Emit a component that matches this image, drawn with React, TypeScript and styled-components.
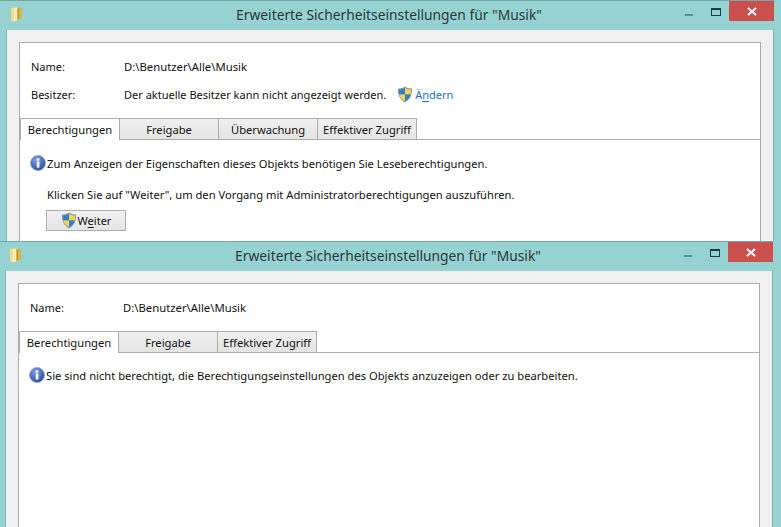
import { FC, ReactNode } from 'react';
import styled, { createGlobalStyle } from 'styled-components';

const GlobalStyle = createGlobalStyle`
  html, body {
    margin: 0;
    padding: 0;
    background: #97d2d2;
    overflow: hidden;
  }
  #root {
    width: 781px;
    height: 527px;
  }
`;

const Desktop = styled.div`
  width: 781px;
  height: 527px;
  overflow: hidden;
  display: flex;
  flex-direction: column;
  font-family: 'Noto Sans', 'Open Sans', sans-serif;
  font-size: 11px;
  color: #111;
`;

const WindowFrame = styled.section<{ $shift: number; $height: number }>`
  flex: none;
  box-sizing: border-box;
  width: 774px;
  height: ${p => p.$height}px;
  margin-left: ${p => p.$shift}px;
  display: flex;
  flex-direction: column;
  background: #97d2d2;
  border-top: 1px solid #71a9aa;
  overflow: hidden;
`;

const TitleBar = styled.header`
  flex: none;
  height: 29px;
  position: relative;
  display: flex;
  justify-content: center;
  padding: 3px 0 0 4px;
  box-sizing: border-box;
`;

const Title = styled.h1`
  margin: 0;
  font-size: 13.8px;
  font-weight: 400;
  line-height: 22px;
  color: #29393a;
`;

const FolderSlot = styled.div`
  position: absolute;
  left: 10px;
  top: 6px;
  line-height: 0;
`;

const Controls = styled.div`
  position: absolute;
  right: 0;
  top: 0;
  display: flex;
  align-items: center;
  height: 20px;
`;

const MinButton = styled.div`
  width: 8px;
  height: 2px;
  margin-top: 7px;
  margin-right: 18px;
  background: #5b8e96;
`;

const MaxButton = styled.div`
  box-sizing: border-box;
  width: 10px;
  height: 8px;
  margin-top: 2px;
  margin-right: 8px;
  border: 1px solid #1b3a44;
  border-top-width: 2px;
`;

const CloseButton = styled.div`
  width: 45px;
  height: 20px;
  background: #c9504d;
  display: flex;
  align-items: center;
  justify-content: center;
  line-height: 0;
`;

const WindowBody = styled.div`
  flex: 1;
  min-height: 0;
  margin: 0 1px 0 7px;
  padding: 12px 12px 0;
  background: #f0f0f0;
  box-shadow: -1px 0 0 #7db4b4, 1px 0 0 #7db4b4;
  display: flex;
  flex-direction: column;
`;

const Panel = styled.div`
  flex: 1;
  box-sizing: border-box;
  background: #fff;
  border: 1px solid #ababab;
  border-bottom: none;
`;

const InfoTable = styled.div`
  display: flex;
  flex-direction: column;
  padding: 13px 0 0 11px;
`;

const InfoRow = styled.div<{ $height: number }>`
  display: flex;
  align-items: center;
  height: ${p => p.$height}px;
`;

const InfoLabel = styled.div`
  flex: none;
  width: 93px;
`;

const InfoValue = styled.span`
  font-size: 11.3px;
`;

const OwnerShield = styled.span`
  display: inline-flex;
  margin-left: 11px;
  margin-right: 1px;
`;

const ChangeLink = styled.a`
  color: #1a6fb5;
  margin-left: 1px;
`;

const AccessKey = styled.span`
  text-decoration: underline;
  text-underline-offset: 2px;
`;

const TabStrip = styled.div<{ $top: number }>`
  display: flex;
  height: 22px;
  margin-top: ${p => p.$top}px;
  box-sizing: border-box;
  border-bottom: 1px solid #ababab;
`;

const Tab = styled.div<{ $active?: boolean }>`
  box-sizing: border-box;
  width: 100px;
  height: 22px;
  margin-left: -1px;
  display: flex;
  align-items: center;
  justify-content: center;
  white-space: nowrap;
  font-size: 11.2px;
  border: 1px solid #ababab;
  border-bottom: ${p => (p.$active ? 'none' : '1px solid #ababab')};
  background: ${p => (p.$active ? '#fff' : 'linear-gradient(#f0f0f0, #e4e4e4)')};
  &:first-child {
    margin-left: 0;
  }
`;

const Message = styled.div<{ $top: number; $indent: number }>`
  display: flex;
  align-items: center;
  height: 18px;
  margin-top: ${p => p.$top}px;
  margin-left: ${p => p.$indent}px;
  gap: 1px;
  white-space: nowrap;
  font-size: 11.18px;
`;

const ElevateButton = styled.button`
  box-sizing: border-box;
  display: flex;
  align-items: center;
  justify-content: center;
  gap: 1px;
  width: 80px;
  height: 21px;
  margin: 7px 0 0 26px;
  padding: 0;
  border: 1px solid #acacac;
  background: linear-gradient(#f0f0f0, #e5e5e5);
  font: inherit;
  color: inherit;
`;

const FolderIcon: FC = () => (
  <svg width="13" height="15" viewBox="0 0 13 15">
    <path d="M1 1 L7 0 V13 L3 15 L1 13 Z" fill="#f5dd84" />
    <path d="M7 1 H12 V12 L7 13 Z" fill="#d8b44c" />
    <path d="M4 2 L7 1 V13 L4 14 Z" fill="#fcf2c0" />
    <path d="M8 2 H9 V12 H8 Z" fill="#b8923a" />
  </svg>
);

const CloseIcon: FC = () => (
  <svg width="10" height="9" viewBox="0 0 10 9">
    <path d="M1 1 L9 8 M9 1 L1 8" stroke="#fff" strokeWidth="2" />
  </svg>
);

const ShieldIcon: FC = () => (
  <svg width="16" height="17" viewBox="0 0 16 17">
    <path d="M8 0.5 C10 2 12.5 2.6 15 2.6 C15.4 8.5 13.5 13.5 8 16.5 C2.5 13.5 0.6 8.5 1 2.6 C3.5 2.6 6 2 8 0.5 Z" fill="#8b98a8" />
    <path d="M8 2 V8.5 H2.1 C2 6.8 2 5.2 2.1 3.6 C4 3.5 6.2 3 8 2 Z" fill="#2f7fd0" />
    <path d="M8 2 C9.8 3 12 3.5 13.9 3.6 C14 5.2 14 6.8 13.9 8.5 H8 Z" fill="#f6d64a" />
    <path d="M2.1 8.5 H8 V15 C4.6 13 2.7 11 2.1 8.5 Z" fill="#f6d64a" />
    <path d="M8 8.5 H13.9 C13.3 11 11.4 13 8 15 Z" fill="#2f7fd0" />
  </svg>
);

const InfoIcon: FC = () => (
  <svg width="16" height="16" viewBox="0 0 16 16">
    <defs>
      <radialGradient id="infoFill" cx="0.4" cy="0.3" r="0.8">
        <stop offset="0" stopColor="#7fa4e6" />
        <stop offset="1" stopColor="#1f3f9e" />
      </radialGradient>
    </defs>
    <circle cx="8" cy="8" r="7.5" fill="url(#infoFill)" stroke="#8d9fc6" strokeWidth="0.8" />
    <rect x="6.8" y="6.6" width="2.6" height="6" fill="#fff" />
    <rect x="6.8" y="3.4" width="2.6" height="2.2" fill="#fff" />
  </svg>
);

interface WindowProps {
  shift: number;
  height: number;
  children: ReactNode;
}

const SecurityWindow: FC<WindowProps> = ({ shift, height, children }) => (
  <WindowFrame $shift={shift} $height={height}>
    <TitleBar>
      <FolderSlot>
        <FolderIcon />
      </FolderSlot>
      <Title>Erweiterte Sicherheitseinstellungen für "Musik"</Title>
      <Controls>
        <MinButton />
        <MaxButton />
        <CloseButton>
          <CloseIcon />
        </CloseButton>
      </Controls>
    </TitleBar>
    <WindowBody>
      <Panel>{children}</Panel>
    </WindowBody>
  </WindowFrame>
);

export default function App() {
  return (
    <Desktop>
      <GlobalStyle />
      <SecurityWindow shift={0} height={241}>
        <InfoTable>
          <InfoRow $height={21}>
            <InfoLabel>Name:</InfoLabel>
            <InfoValue>D:\Benutzer\Alle\Musik</InfoValue>
          </InfoRow>
          <InfoRow $height={35}>
            <InfoLabel>Besitzer:</InfoLabel>
            Der aktuelle Besitzer kann nicht angezeigt werden.
            <OwnerShield>
              <ShieldIcon />
            </OwnerShield>
            <ChangeLink>
              Ä<AccessKey>n</AccessKey>dern
            </ChangeLink>
          </InfoRow>
        </InfoTable>
        <TabStrip $top={6}>
          <Tab $active>Berechtigungen</Tab>
          <Tab>Freigabe</Tab>
          <Tab>Überwachung</Tab>
          <Tab>Effektiver Zugriff</Tab>
        </TabStrip>
        <Message $top={14} $indent={10}>
          <InfoIcon />
          Zum Anzeigen der Eigenschaften dieses Objekts benötigen Sie Leseberechtigungen.
        </Message>
        <Message $top={13} $indent={27}>
          Klicken Sie auf "Weiter", um den Vorgang mit Administratorberechtigungen auszuführen.
        </Message>
        <ElevateButton>
          <ShieldIcon />
          <span>
            W<AccessKey>e</AccessKey>iter
          </span>
        </ElevateButton>
      </SecurityWindow>
      <SecurityWindow shift={-1} height={286}>
        <InfoTable>
          <InfoRow $height={21}>
            <InfoLabel>Name:</InfoLabel>
            <InfoValue>D:\Benutzer\Alle\Musik</InfoValue>
          </InfoRow>
        </InfoTable>
        <TabStrip $top={13}>
          <Tab $active>Berechtigungen</Tab>
          <Tab>Freigabe</Tab>
          <Tab>Effektiver Zugriff</Tab>
        </TabStrip>
        <Message $top={13} $indent={10}>
          <InfoIcon />
          Sie sind nicht berechtigt, die Berechtigungseinstellungen des Objekts anzuzeigen oder zu bearbeiten.
        </Message>
      </SecurityWindow>
    </Desktop>
  );
}
